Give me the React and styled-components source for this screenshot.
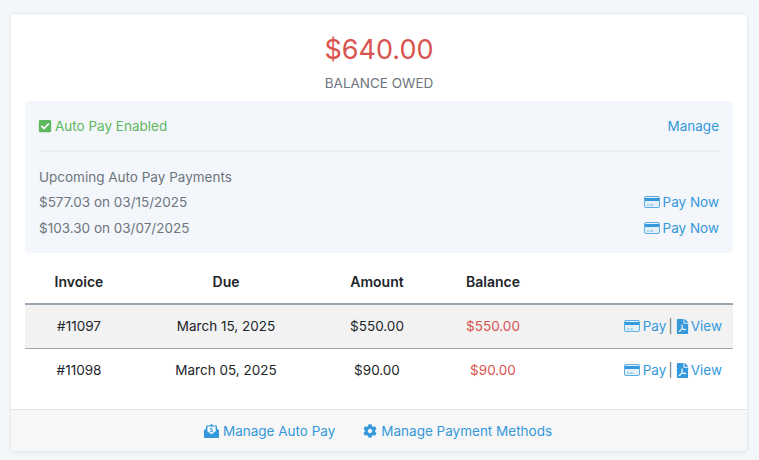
import styled, { createGlobalStyle } from "styled-components";
import { FaCheckSquare, FaCog, FaFilePdf } from "react-icons/fa";

const GlobalStyle = createGlobalStyle`
  html, body {
    margin: 0;
    background: #f4f7fa;
    font-family: "Inter", "Liberation Sans", sans-serif;
    font-size: 13.5px;
  }
`;

const Page = styled.div`
  height: 460px;
  box-sizing: border-box;
  padding: 14px 12px 9px 11px;
  overflow: hidden;
`;

const Card = styled.div`
  height: 437px;
  box-sizing: border-box;
  background: #fff;
  border-radius: 4px;
  box-shadow: 0 0 0 1px #e6e9ec, 0 1px 3px rgba(60, 70, 80, 0.14);
  display: flex;
  flex-direction: column;
`;

const Summary = styled.div`
  text-align: center;
  padding-top: 18px;
`;

const Total = styled.div`
  color: #d9534f;
  font-size: 27px;
  line-height: 36px;
`;

const TotalLabel = styled.div`
  color: #6c757d;
  font-size: 13.5px;
  line-height: 17px;
  margin-top: 7px;
`;

const AutoPayBox = styled.div`
  margin: 9px 14px 0;
  background: #f3f6fa;
  border-radius: 4px;
  padding: 12px 14px;
  color: #6c757d;
`;

const Row = styled.div`
  display: flex;
  justify-content: space-between;
  align-items: center;
  height: ${(p) => p.$height || 26}px;
`;

const Enabled = styled.span`
  color: #5cb85c;
  display: inline-flex;
  align-items: center;
  gap: 3px;
`;

const CheckIcon = styled(FaCheckSquare)`
  margin-left: -1px;
`;

const Divider = styled.div`
  height: 2px;
  background: #e9ecef;
  margin: 11px 0 12px;
`;

const Link = styled.a`
  color: #3498db;
  display: inline-flex;
  align-items: center;
  gap: ${(p) => p.$gap || 3}px;
`;

const InvoiceGrid = styled.div`
  display: grid;
  grid-template-columns: 108px 186px 116px 116px 1fr;
  align-items: center;
  text-align: center;
  height: ${(p) => p.$height}px;
  padding: ${(p) => p.$top || 0}px 0 ${(p) => p.$bottom || 0}px;
  margin: 0 14px;
  color: #212529;
  background: ${(p) => (p.$shaded ? "#f2f2f2" : "transparent")};
  border-bottom: ${(p) => p.$line || 0}px solid #9aa7b2;
  box-sizing: border-box;
`;

const HeadCell = styled.div`
  font-weight: 600;
  font-size: 14px;
`;

const Overdue = styled.div`
  color: #d9534f;
`;

const Actions = styled.div`
  display: flex;
  justify-content: flex-end;
  align-items: center;
  padding-right: 11px;
`;

const Separator = styled.span`
  color: #6c757d;
  margin: 0 2px;
`;

const Footer = styled.div`
  margin-top: auto;
  height: 42px;
  box-sizing: border-box;
  padding-right: 2px;
  background: #f7f7f7;
  border-top: 1px solid #e4e4e4;
  border-radius: 0 0 4px 4px;
  display: flex;
  justify-content: center;
  align-items: center;
  gap: 28px;
`;

const CardIcon = () => (
  <svg width="16" height="12" viewBox="0 0 16 12" fill="none">
    <rect x="0.5" y="0.5" width="15" height="11" rx="1.5" fill="#e3f0fa" stroke="#5aaee3" />
    <rect x="1" y="2" width="14" height="3" fill="#3498db" />
    <rect x="3" y="8.5" width="2" height="1" fill="#6db6e6" />
    <rect x="6" y="8.5" width="3" height="1" fill="#6db6e6" />
  </svg>
);

const EnvelopeDollarIcon = () => (
  <svg width="15" height="14" viewBox="0 0 15 14">
    <path fill="#3498db" d="M0 6.2 2 4.6V2.4C2 1.8 2.5 1.4 3 1.4h2.6L7.5 0l1.9 1.4H12c.5 0 1 .4 1 1v2.2l2 1.6V13c0 .6-.5 1-1 1H1c-.5 0-1-.4-1-1z" />
    <path fill="#fff" d="M3.4 2.6h8.2v4.6L7.5 10.2 3.4 7.2z" />
    <path fill="#3498db" d="M7.1 3.2h.8v.7c.5.1.9.3 1.1.6l-.5.5c-.3-.3-.6-.4-1-.4-.4 0-.6.1-.6.4 0 .6 2.2.3 2.2 1.8 0 .6-.5 1-1.2 1.1v.7h-.8v-.7c-.6-.1-1-.3-1.3-.7l.5-.5c.3.3.7.5 1.1.5.5 0 .8-.2.8-.4 0-.7-2.2-.3-2.2-1.8 0-.6.5-1 1.1-1.1z" />
  </svg>
);

const invoices = [
  { id: "#11097", due: "March 15, 2025", amount: "$550.00", shaded: true },
  { id: "#11098", due: "March 05, 2025", amount: "$90.00" },
];

const payments = ["$577.03 on 03/15/2025", "$103.30 on 03/07/2025"];

export default function App() {
  return (
    <Page>
      <GlobalStyle />
      <Card>
        <Summary>
          <Total>$640.00</Total>
          <TotalLabel>BALANCE OWED</TotalLabel>
        </Summary>
        <AutoPayBox>
          <Row>
            <Enabled>
              <CheckIcon size={14} />
              Auto Pay Enabled
            </Enabled>
            <Link>Manage</Link>
          </Row>
          <Divider />
          <Row $height={25}>Upcoming Auto Pay Payments</Row>
          {payments.map((payment) => (
            <Row key={payment}>
              {payment}
              <Link>
                <CardIcon />
                Pay Now
              </Link>
            </Row>
          ))}
        </AutoPayBox>
        <InvoiceGrid $height={52} $top={6} $line={2}>
          <HeadCell>Invoice</HeadCell>
          <HeadCell>Due</HeadCell>
          <HeadCell>Amount</HeadCell>
          <HeadCell>Balance</HeadCell>
          <div />
        </InvoiceGrid>
        {invoices.map((inv) => (
          <InvoiceGrid
            key={inv.id}
            $height={inv.shaded ? 44 : 43}
            $bottom={1}
            $line={inv.shaded ? 1 : 0}
            $shaded={inv.shaded}
          >
            <div>{inv.id}</div>
            <div>{inv.due}</div>
            <div>{inv.amount}</div>
            <Overdue>{inv.amount}</Overdue>
            <Actions>
              <Link>
                <CardIcon />
                Pay
              </Link>
              <Separator>|</Separator>
              <Link $gap={1}>
                <FaFilePdf size={15} />
                View
              </Link>
            </Actions>
          </InvoiceGrid>
        ))}
        <Footer>
          <Link $gap={4}>
            <EnvelopeDollarIcon />
            Manage Auto Pay
          </Link>
          <Link $gap={4}>
            <FaCog size={14} />
            Manage Payment Methods
          </Link>
        </Footer>
      </Card>
    </Page>
  );
}
